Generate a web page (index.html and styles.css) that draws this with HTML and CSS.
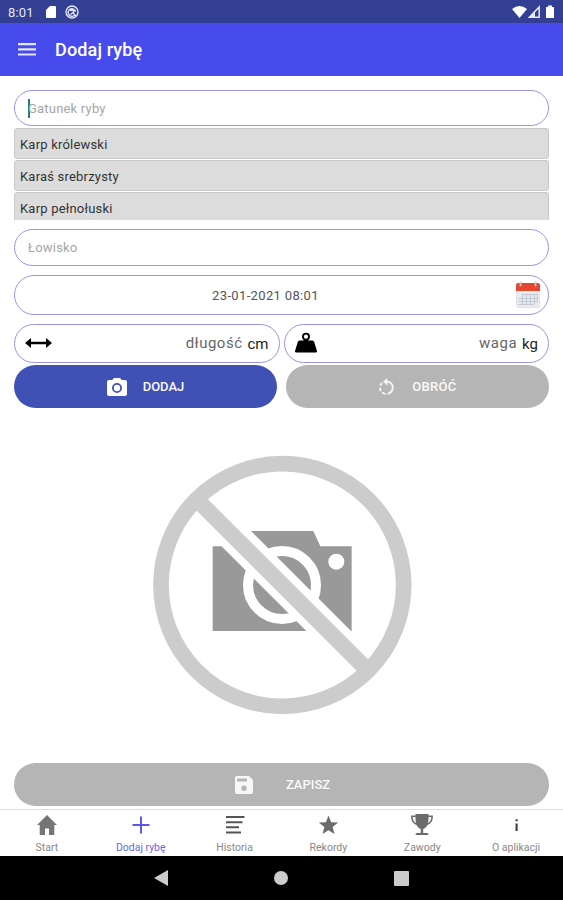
FILE: index.html
```html
<!DOCTYPE html>
<html lang="pl">
<head>
  <meta charset="UTF-8">
  <meta name="viewport" content="width=device-width, initial-scale=1.0">
  <title>Dodaj rybę</title>
  <link rel="stylesheet" href="styles.css">
</head>
<body>
<div class="status-bar">
  <span class="clock">8:01</span>
  <svg class="sd" width="10" height="12" viewBox="0 0 10 12"><path fill="#fff" d="M4 0h5q1 0 1 1v10q0 1-1 1H1q-1 0-1-1V4z"/></svg>
  <svg class="sync" width="14" height="14" viewBox="0 0 14 14" fill="none" stroke="#dfe3f5" stroke-width="1.4"><circle cx="7" cy="7" r="6"/><path d="M10 9.8A3.8 3.8 0 1 1 10.6 6.500M5 5.200h3.800v1.500L5.500 9.500M8 8l3 3"/></svg>
  <svg class="signal" width="44" height="14" viewBox="0 0 44 14">
    <path fill="#fff" d="M0 4Q7.500-2 15 4L7.500 13z"/>
    <path fill="none" stroke="#e6e8f7" stroke-width="1.500" d="M17.500 12.200L27.200 2v10.200z"/>
    <path fill="#e6e8f7" d="M16 13L23 5.500V13z"/>
    <path fill="#fff" d="M34 2h2V.5h4V2h2v11h-8z"/>
  </svg>
</div>
<header class="app-bar">
  <svg width="18" height="13" viewBox="0 0 18 13" fill="#e4e4fc"><path d="M0 0h18v2.200H0zM0 5.200h18v2.200H0zM0 10.400h18v2.200H0z"/></svg>
  <h1>Dodaj rybę</h1>
</header>

<main class="content">
  <div class="field species"><span class="caret"></span><span class="hint">Gatunek ryby</span></div>
  <ul class="suggestions">
    <li>Karp królewski</li>
    <li>Karaś srebrzysty</li>
    <li>Karp pełnołuski</li>
  </ul>
  <div class="field fishery"><span class="hint">Łowisko</span></div>
  <div class="field date">
    <span>23-01-2021 08:01</span>
    <svg class="calendar" width="24" height="27" viewBox="0 0 24 27">
      <rect x=".5" y="3" width="23" height="23.500" rx="2" fill="#e9ebef" stroke="#dfe1e6"/>
      <path fill="#e4472f" d="M0 10V4q0-2 2-2h20q2 0 2 2v6z"/>
      <path fill="none" stroke="#c3c9d4" d="M6 13.500h15.500M2.500 17.500h19M2.500 20.500h19M2.500 23.500h15M6.500 13v10.500M10.500 13v10.500M14.500 13v10.500M18.500 13v10.500M21.500 13v7.500"/>
      <path fill="none" stroke="#d8c2c4" stroke-width="2" stroke-linecap="round" d="M4.500 1.500v3M19.500 1.500v3"/>
    </svg>
  </div>
  <div class="measures">
    <div class="field length">
      <svg width="27" height="10" viewBox="0 0 27 10"><path d="M0 5L6 0v3.800h15V0l6 5-6 5V6.200H6V10z"/></svg>
      <span class="value">długość</span><span class="unit">cm</span>
    </div>
    <div class="field weight">
      <svg width="22" height="21" viewBox="0 0 22 21"><path fill-rule="evenodd" d="M2.800 10Q3.100 8.500 4.600 8.500H9Q7 7 7 4.700a4 4 0 0 1 8 0Q15 7 13 8.500h4.400q1.500 0 1.800 1.500L22 19q.3 1.500-1.200 1.500H1.200Q-.3 20.500 0 19zM11 2.600a2.100 2.100 0 0 0 0 4.200 2.100 2.100 0 0 0 0-4.200z"/></svg>
      <span class="value">waga</span><span class="unit">kg</span>
    </div>
  </div>
  <div class="photo-buttons">
    <button class="btn btn-add" type="button">
      <svg width="20" height="18" viewBox="0 0 20 18"><path fill="#fff" fill-rule="evenodd" d="M2 2h3.200L7 0h6l1.800 2H18q2 0 2 2v12q0 2-2 2H2q-2 0-2-2V4q0-2 2-2zm8 3a5 5 0 0 0 0 10 5 5 0 0 0 0-10z"/><circle cx="10" cy="10" r="3.200" fill="#fff"/></svg>
      DODAJ
    </button>
    <button class="btn btn-rotate" type="button">
      <svg width="17" height="18" viewBox="0 0 17 18"><g fill="none" stroke="#f4f4f4" stroke-width="2"><path d="M8 3.400A6.300 6.300 0 0 1 9.500 15.900"/><path stroke-dasharray="3.500 2" d="M7.500 15.900A6.300 6.300 0 0 1 4 5"/></g><path fill="#f4f4f4" d="M9.300 0v7.500L5 3.600z"/></svg>
      OBRÓĆ
    </button>
  </div>

  <div class="preview">
    <svg width="285" height="280" viewBox="0 0 855 840">
      <path fill="#999" d="M313 304L333 258H520L541 304H635V558H218V304z"/>
      <circle cx="426" cy="420" r="102" fill="none" stroke="#fff" stroke-width="30"/>
      <circle cx="589" cy="350" r="24" fill="#fff"/>
      <path stroke="#fff" stroke-width="95" d="M217 209L637 629"/>
      <circle cx="427" cy="420" r="364" fill="none" stroke="#ccc" stroke-width="47"/>
      <path stroke="#ccc" stroke-width="48" d="M175 168L679 672"/>
    </svg>
  </div>

  <button class="btn btn-save" type="button">
    <svg width="18" height="18" viewBox="0 0 18 18"><path fill="#f7f7f7" fill-rule="evenodd" d="M2 0h12l4 4v12q0 2-2 2H2q-2 0-2-2V2q0-2 2-2zm0 2.500v3h10v-3zM9 9.500a2.700 2.700 0 0 0 0 5.400 2.700 2.700 0 0 0 0-5.400z"/></svg>
    ZAPISZ
  </button>
</main>

<nav class="tabs">
  <a class="tab">
    <svg width="24" height="24" viewBox="0 0 24 24" fill="#757575"><path d="M12 2L22 12h-2.700v10H14v-6.500h-4V22H4.700V12H2z"/></svg>
    Start
  </a>
  <a class="tab active">
    <svg width="24" height="24" viewBox="0 0 24 24" fill="none" stroke="#5a5ae6" stroke-width="2"><path d="M12 3.500v17M3.500 12h17"/></svg>
    Dodaj rybę
  </a>
  <a class="tab">
    <svg width="24" height="24" viewBox="0 0 24 24" fill="none" stroke="#555" stroke-width="1.900"><path d="M3 4h18.500M3 9.200h16.500M3 14.300h13M3 19.500h15"/></svg>
    Historia
  </a>
  <a class="tab">
    <svg width="24" height="24" viewBox="0 0 24 24" fill="#6b6b6b"><path d="M12.500 2.500l2.600 6.700 7.100.4-5.600 4.500 1.900 7-6-3.900-6 3.900 1.900-7-5.600-4.500 7.100-.4z"/></svg>
    Rekordy
  </a>
  <a class="tab">
    <svg width="24" height="24" viewBox="0 0 24 24"><path fill="#6b6b6b" d="M5.500 1h13v5q0 8-5.300 10v4H17q1.500 0 1.500 2h-13q0-2 1.500-2h3.800v-4Q5.500 14 5.500 6z"/><path fill="none" stroke="#6b6b6b" stroke-width="1.500" d="M6 3.200H1.800q0 7 6 8.300M18 3.200h4.200q0 7-6 8.300"/></svg>
    Zawody
  </a>
  <a class="tab">
    <svg width="24" height="24" viewBox="0 0 24 24" fill="#444"><path d="M11.500 6.200h2.200v2h-2.200zM11.500 10.500h2.200v7.500h-2.200z"/></svg>
    O aplikacji
  </a>
</nav>
<div class="system-nav">
  <svg width="14" height="16" viewBox="0 0 14 16" fill="#ccc"><path d="M14 0v16L0 8z"/></svg>
  <svg width="14" height="14" viewBox="0 0 14 14" fill="#ccc"><circle cx="7" cy="7" r="7"/></svg>
  <svg width="15" height="15" viewBox="0 0 15 15" fill="#ccc"><rect width="15" height="15" rx="1"/></svg>
</div>
</body>
</html>
```
FILE: styles.css
```css
* {
  box-sizing: border-box;
}
body {
  margin: 0;
  height: 900px;
  display: flex;
  flex-direction: column;
  overflow: hidden;
  background: #fff;
  font-family: Roboto, "Liberation Sans", sans-serif;
}
svg {
  display: block;
  flex-shrink: 0;
}
.status-bar {
  height: 23px;
  display: flex;
  align-items: center;
  padding: 1px 7px 0 8px;
  background: #323f92;
  color: #e6e9f8;
}
.clock {
  width: 38px;
  font-size: 13px;
  letter-spacing: 0.2px;
}
.sync {
  margin-left: 9px;
}
.signal {
  margin-left: auto;
}
.app-bar {
  height: 53px;
  display: flex;
  align-items: center;
  padding: 0 18px;
  gap: 19px;
  background: #484bec;
}
.app-bar svg {
  margin-top: -1px;
}
h1 {
  margin: 0;
  font-size: 18px;
  font-weight: 500;
  letter-spacing: 0.15px;
  color: #fff;
}
.content {
  height: 733px;
  padding: 14px 14px 0;
}
.field {
  height: 37px;
  display: flex;
  align-items: center;
  padding: 0 13px;
  border: 1px solid #9a94e6;
  border-radius: 20px;
  font-size: 13px;
}
.species {
  height: 36px;
}
.hint {
  color: #a6a6a6;
  letter-spacing: 0.2px;
}
.caret {
  width: 2px;
  height: 19px;
  margin-right: -2px;
  background: #23806c;
}
.suggestions {
  height: 92px;
  margin: 2px 0 9px;
  padding: 0;
  overflow: hidden;
  list-style: none;
}
.suggestions li {
  height: 31px;
  margin-bottom: 1px;
  padding-left: 5px;
  border: 1px solid #c9c9c9;
  border-radius: 3px;
  background: #dcdcdc;
  font-size: 13px;
  line-height: 31px;
  letter-spacing: 0.2px;
  color: #333;
}
.date {
  position: relative;
  height: 40px;
  margin-top: 9px;
  justify-content: center;
  padding-right: 45px;
  letter-spacing: 0.35px;
  color: #555;
}
.calendar {
  position: absolute;
  right: 8px;
  top: 5px;
}
.measures {
  display: grid;
  grid-template-columns: 1fr 1fr;
  gap: 4px;
  margin-top: 9px;
}
.measures .field {
  height: 39px;
  padding: 0 10px;
}
.measures svg {
  margin-top: -2px;
}
.value {
  margin: -2px 0 0 auto;
  font-size: 15px;
  letter-spacing: 0.5px;
  color: #666;
}
.unit {
  margin-left: 5px;
  font-size: 15px;
  color: #222;
}
.photo-buttons {
  display: grid;
  grid-template-columns: 1fr 1fr;
  gap: 9px;
  margin-top: 2px;
}
.btn {
  width: 100%;
  height: 43px;
  display: flex;
  align-items: center;
  justify-content: center;
  gap: 16px;
  border: none;
  border-radius: 22px;
  background: #b5b5b5;
  color: #fafafa;
  font-family: inherit;
  font-size: 13px;
  font-weight: 500;
}
.btn-add {
  background: #3f51b5;
}
.btn-rotate {
  gap: 17px;
  letter-spacing: 0.3px;
}
.preview {
  display: flex;
  justify-content: center;
  margin-top: 37px;
  padding-left: 2px;
}
.btn-save {
  gap: 33px;
  margin-top: 38px;
  padding-left: 8px;
}
.tabs {
  height: 47px;
  display: grid;
  grid-template-columns: repeat(6, 1fr);
  border-top: 1px solid #ddd;
}
.tab {
  display: flex;
  flex-direction: column;
  align-items: center;
  padding-top: 3px;
  gap: 4px;
  font-size: 10.5px;
  line-height: 13px;
  color: #888;
}
.tab.active {
  color: #6767e6;
}
.system-nav {
  height: 44px;
  display: flex;
  align-items: center;
  justify-content: center;
  gap: 106px;
  background: #000;
}
```
